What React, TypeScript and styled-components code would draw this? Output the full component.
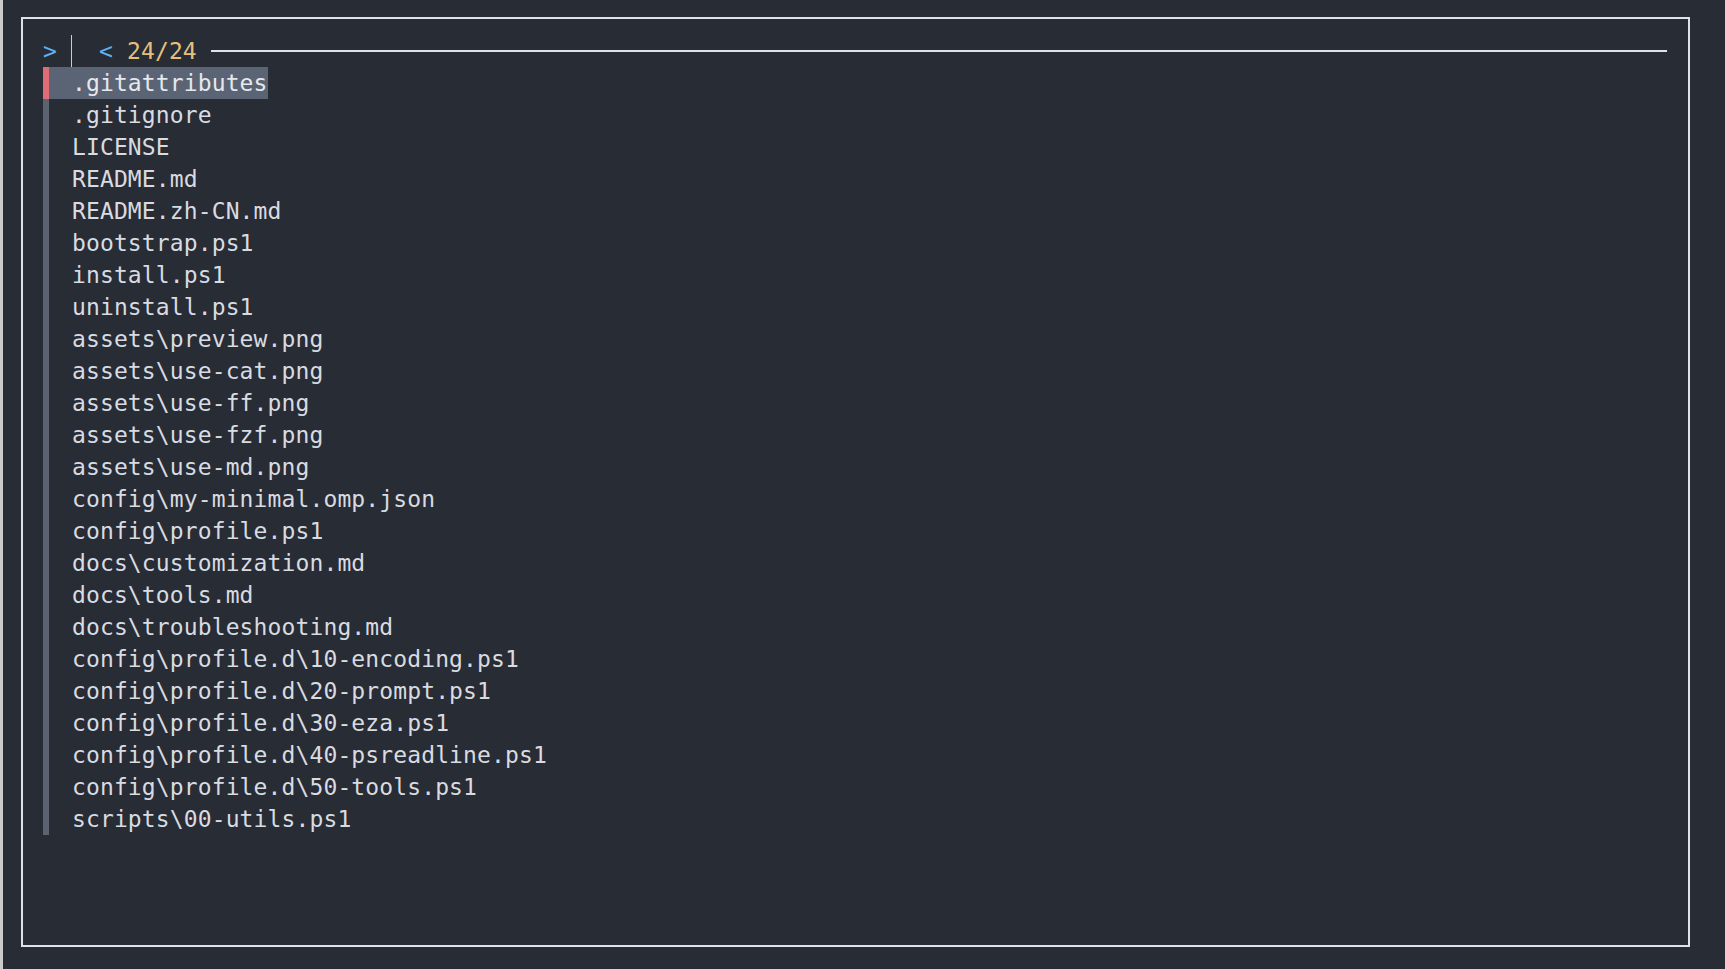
import React from "react";
import styled, { createGlobalStyle } from "styled-components";

const Global = createGlobalStyle`
  html, body { margin: 0; padding: 0; background: #282c34; overflow: hidden; }
  #root { width: 1725px; height: 969px; }
`;

const Screen = styled.div`
  width: 1725px;
  height: 969px;
  display: flex;
  background: #282c34;
  font-family: "DejaVu Sans Mono", "Liberation Mono", monospace;
  font-size: 23px;
  letter-spacing: 0.12px;
  color: #d8dbe1;
`;

const EdgeStrip = styled.div`
  width: 3px;
  flex: none;
  background: #cbcbcb;
`;

const Frame = styled.div`
  margin: 17px 0 0 18px;
  width: 1669px;
  height: 930px;
  box-sizing: border-box;
  border: 2px solid #dfe2e8;
  padding: 16px 21px 0 20px;
  display: flex;
  flex-direction: column;
`;

const PromptRow = styled.div`
  height: 32px;
  display: flex;
  align-items: center;
  white-space: pre;
`;

const Glyph = styled.span<{ $color: string; $w?: number }>`
  color: ${(p) => p.$color};
  ${(p) => (p.$w ? `width: ${p.$w}px; flex: none;` : "")}
`;

const Cursor = styled.span`
  width: 1px;
  height: 32px;
  background: #c9ccd2;
  flex: none;
  margin-right: 27px;
`;

const Rule = styled.span`
  flex: 1;
  height: 2px;
  background: #dfe2e8;
  margin-left: 14px;
`;

const List = styled.div`
  display: flex;
  flex-direction: column;
`;

const Row = styled.div`
  height: 32px;
  display: flex;
  align-items: stretch;
  white-space: pre;
`;

const Gutter = styled.span<{ $active: boolean }>`
  width: 6px;
  flex: none;
  background: ${(p) => (p.$active ? "#e06c75" : "#5c6370")};
`;

const Entry = styled.span<{ $active: boolean }>`
  padding-left: 23px;
  display: flex;
  align-items: center;
  background: ${(p) => (p.$active ? "#5b6475" : "transparent")};
  color: ${(p) => (p.$active ? "#e6e8ec" : "#d8dbe1")};
`;

const files = [
  ".gitattributes",
  ".gitignore",
  "LICENSE",
  "README.md",
  "README.zh-CN.md",
  "bootstrap.ps1",
  "install.ps1",
  "uninstall.ps1",
  "assets\\preview.png",
  "assets\\use-cat.png",
  "assets\\use-ff.png",
  "assets\\use-fzf.png",
  "assets\\use-md.png",
  "config\\my-minimal.omp.json",
  "config\\profile.ps1",
  "docs\\customization.md",
  "docs\\tools.md",
  "docs\\troubleshooting.md",
  "config\\profile.d\\10-encoding.ps1",
  "config\\profile.d\\20-prompt.ps1",
  "config\\profile.d\\30-eza.ps1",
  "config\\profile.d\\40-psreadline.ps1",
  "config\\profile.d\\50-tools.ps1",
  "scripts\\00-utils.ps1",
];

export default function App() {
  return (
    <>
      <Global />
      <Screen>
        <EdgeStrip />
        <Frame>
          <PromptRow>
            <Glyph $color="#61afef" $w={28}>{">"}</Glyph>
            <Cursor />
            <Glyph $color="#61afef" $w={28}>{"<"}</Glyph>
            <Glyph $color="#e5c07b">24/24</Glyph>
            <Rule />
          </PromptRow>
          <List>
            {files.map((f, i) => (
              <Row key={f}>
                <Gutter $active={i === 0} />
                <Entry $active={i === 0}>{f}</Entry>
              </Row>
            ))}
          </List>
        </Frame>
      </Screen>
    </>
  );
}
